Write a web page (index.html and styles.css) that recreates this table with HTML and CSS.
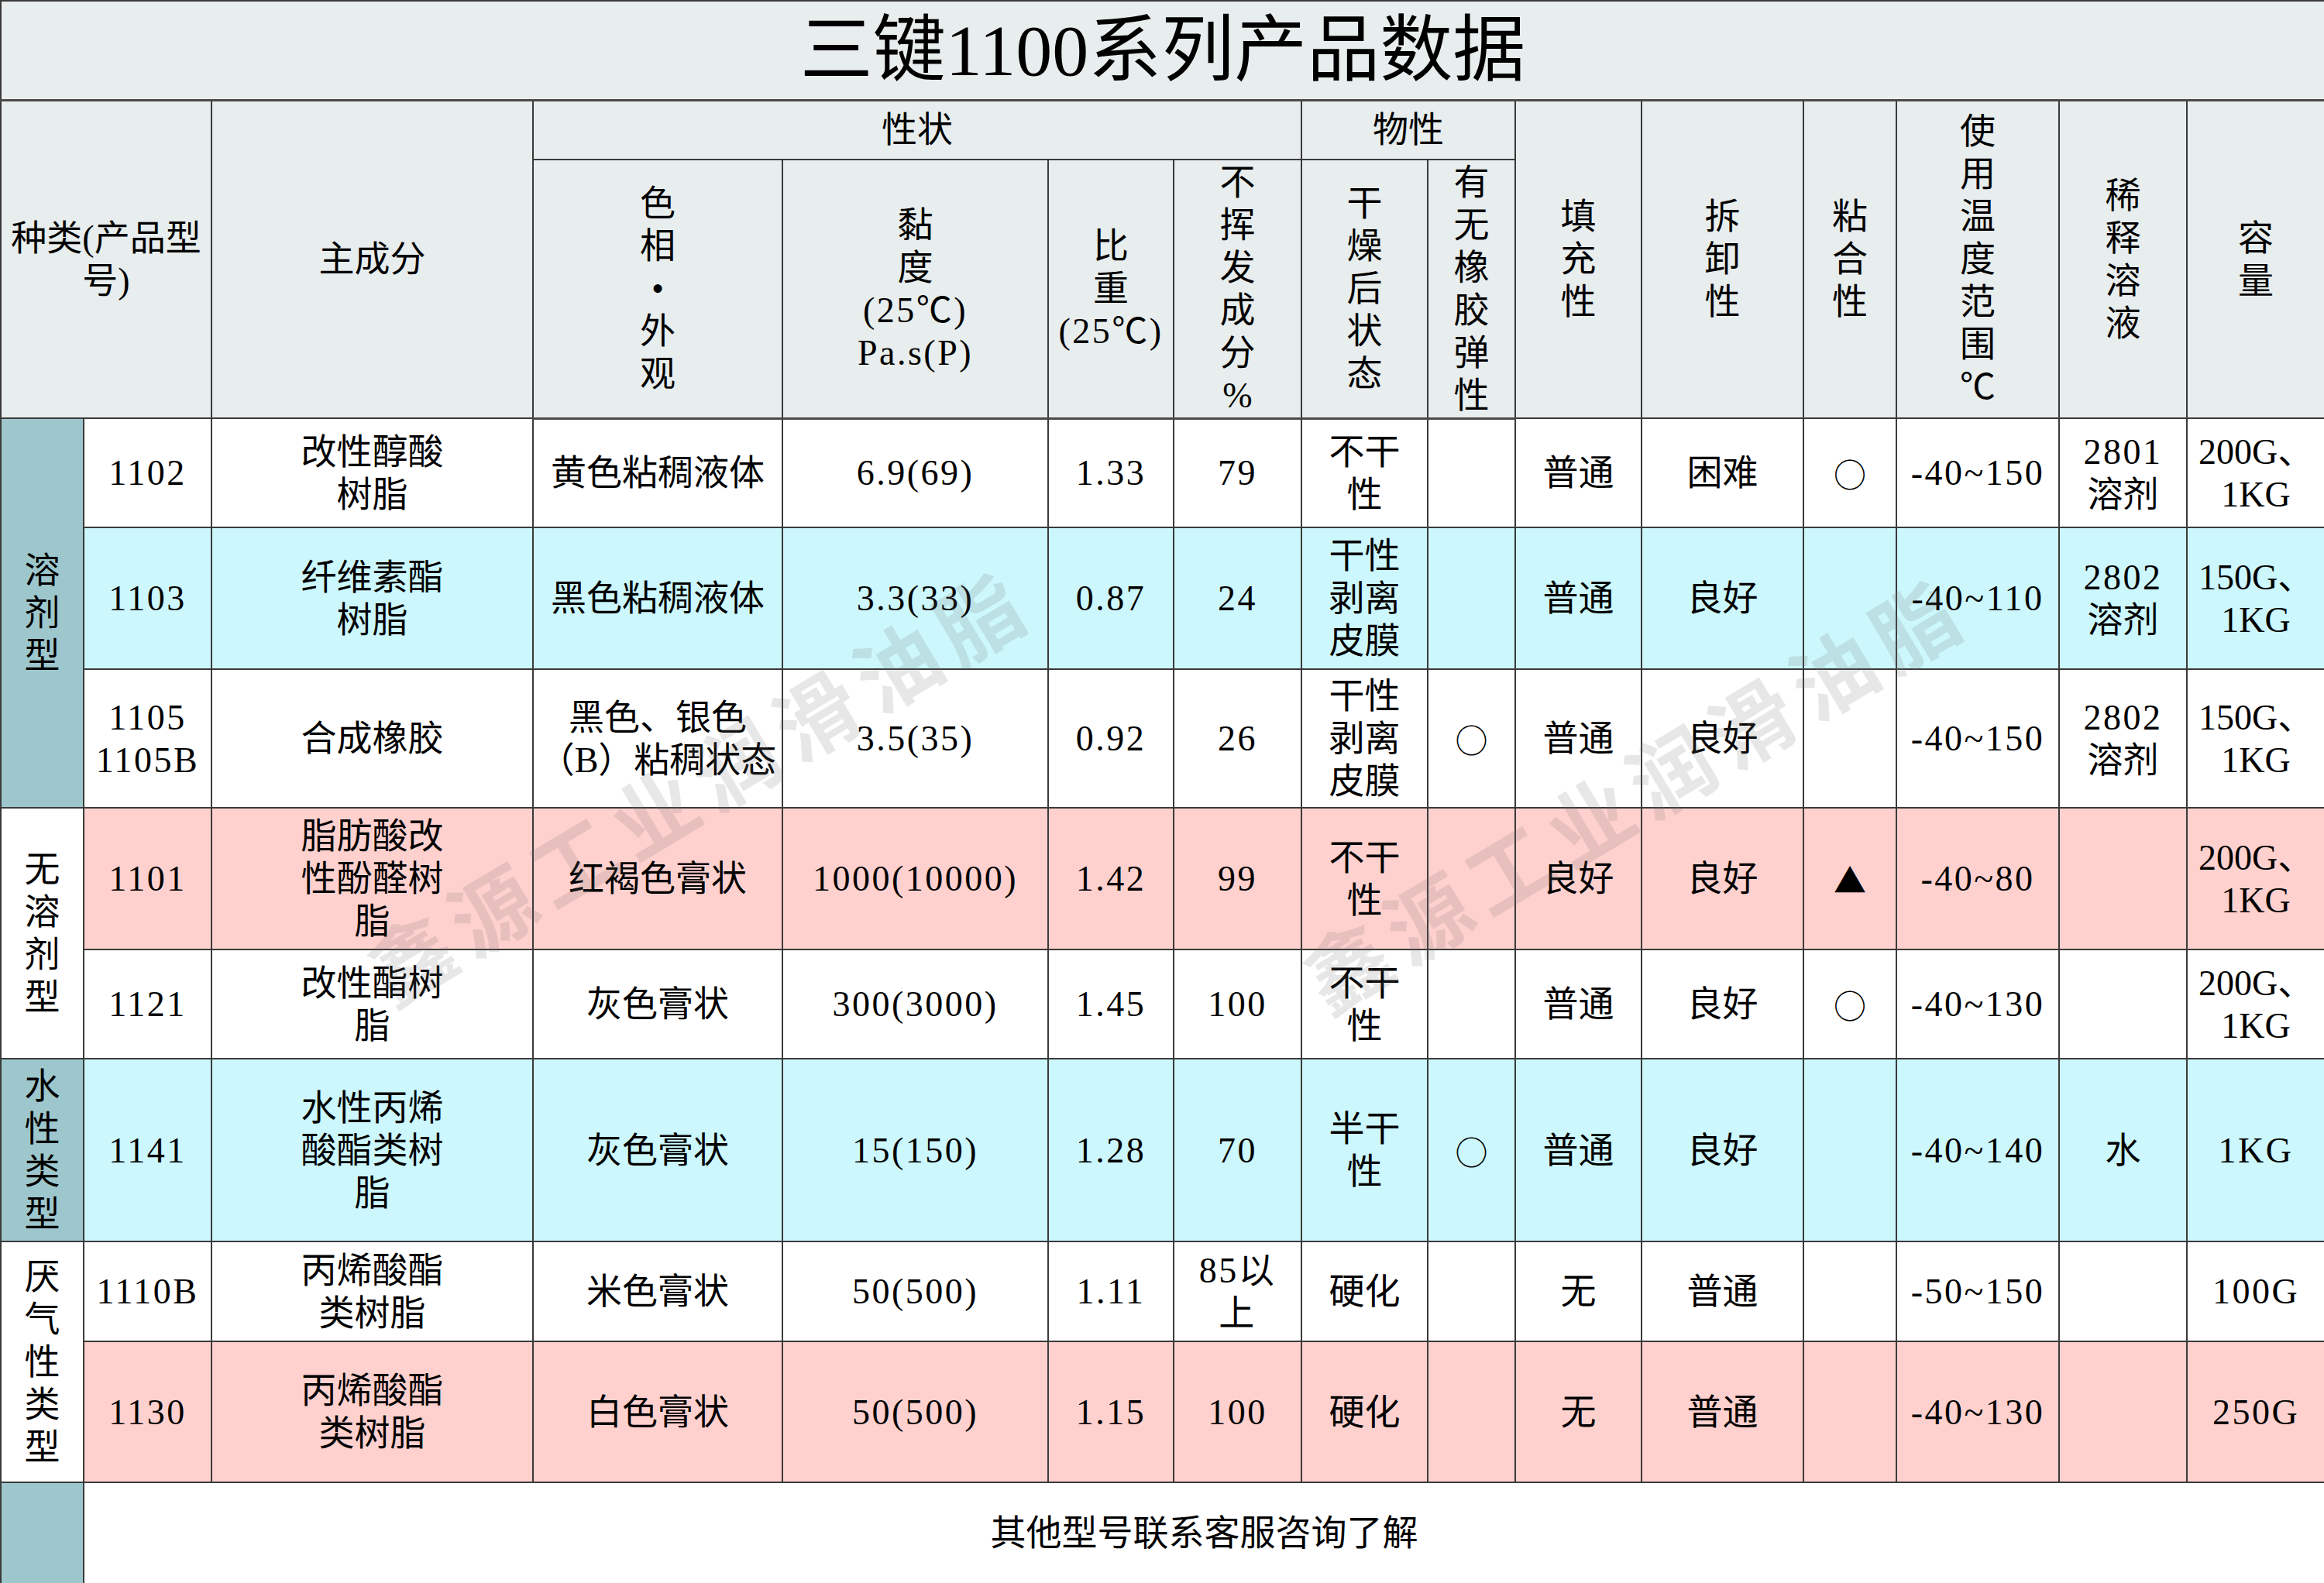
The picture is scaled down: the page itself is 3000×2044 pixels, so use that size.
FILE: index.html
```html
<!DOCTYPE html>
<html lang="zh-CN">
<head>
<meta charset="utf-8">
<title>三键1100系列产品数据</title>
<link rel="stylesheet" href="styles.css">
</head>
<body>
<div class="sheet">
<table class="grid">
  <colgroup>
    <col class="c0"><col class="c1"><col class="c2"><col class="c3"><col class="c4">
    <col class="c5"><col class="c6"><col class="c7"><col class="c8"><col class="c9">
    <col class="c10"><col class="c11"><col class="c12"><col class="c13"><col class="c14">
  </colgroup>
  <tr class="r-title">
    <th class="title" colspan="15">三键1100系列产品数据</th>
  </tr>
  <tr class="r-h1">
    <th class="hd" colspan="2" rowspan="2">种类(产品型<br>号)</th>
    <th class="hd" rowspan="2">主成分</th>
    <th class="hd" colspan="4">性状</th>
    <th class="hd" colspan="2">物性</th>
    <th class="hd" rowspan="2">填<br>充<br>性</th>
    <th class="hd" rowspan="2">拆<br>卸<br>性</th>
    <th class="hd" rowspan="2">粘<br>合<br>性</th>
    <th class="hd" rowspan="2">使<br>用<br>温<br>度<br>范<br>围<br>℃</th>
    <th class="hd" rowspan="2">稀<br>释<br>溶<br>液</th>
    <th class="hd" rowspan="2">容<br>量</th>
  </tr>
  <tr class="r-h2">
    <th class="hd">色<br>相<br>•<br>外<br>观</th>
    <th class="hd">黏<br>度<br><span class="n">(25℃)</span><br><span class="n">Pa.s(P)</span></th>
    <th class="hd">比<br>重<br><span class="n">(25℃)</span></th>
    <th class="hd">不<br>挥<br>发<br>成<br>分<br>%</th>
    <th class="hd">干<br>燥<br>后<br>状<br>态</th>
    <th class="hd">有<br>无<br>橡<br>胶<br>弹<br>性</th>
  </tr>

  <tr class="row w h141">
    <td class="cat teal" rowspan="3">溶<br>剂<br>型</td>
    <td class="n">1102</td><td>改性醇酸<br>树脂</td><td>黄色粘稠液体</td><td class="n">6.9(69)</td><td class="n">1.33</td><td class="n">79</td>
    <td>不干<br>性</td><td></td><td>普通</td><td>困难</td><td class="sym">○</td><td class="n">-40~150</td>
    <td><span class="n">2801</span><br>溶剂</td><td>200G、<br>1KG</td>
  </tr>
  <tr class="row c h183">
    <td class="n">1103</td><td>纤维素酯<br>树脂</td><td>黑色粘稠液体</td><td class="n">3.3(33)</td><td class="n">0.87</td><td class="n">24</td>
    <td>干性<br>剥离<br>皮膜</td><td></td><td>普通</td><td>良好</td><td></td><td class="n">-40~110</td>
    <td><span class="n">2802</span><br>溶剂</td><td>150G、<br>1KG</td>
  </tr>
  <tr class="row w h179">
    <td class="n">1105<br>1105B</td><td>合成橡胶</td><td>黑色、银色<br>（B）粘稠状态</td><td class="n">3.5(35)</td><td class="n">0.92</td><td class="n">26</td>
    <td>干性<br>剥离<br>皮膜</td><td class="sym">○</td><td>普通</td><td>良好</td><td></td><td class="n">-40~150</td>
    <td><span class="n">2802</span><br>溶剂</td><td>150G、<br>1KG</td>
  </tr>
  <tr class="row p h183">
    <td class="cat white" rowspan="2">无<br>溶<br>剂<br>型</td>
    <td class="n">1101</td><td>脂肪酸改<br>性酚醛树<br>脂</td><td>红褐色膏状</td><td class="n">1000(10000)</td><td class="n">1.42</td><td class="n">99</td>
    <td>不干<br>性</td><td></td><td>良好</td><td>良好</td><td class="sym">▲</td><td class="n">-40~80</td>
    <td></td><td>200G、<br>1KG</td>
  </tr>
  <tr class="row w h141">
    <td class="n">1121</td><td>改性酯树<br>脂</td><td>灰色膏状</td><td class="n">300(3000)</td><td class="n">1.45</td><td class="n">100</td>
    <td>不干<br>性</td><td></td><td>普通</td><td>良好</td><td class="sym">○</td><td class="n">-40~130</td>
    <td></td><td>200G、<br>1KG</td>
  </tr>
  <tr class="row c h236">
    <td class="cat teal">水<br>性<br>类<br>型</td>
    <td class="n">1141</td><td>水性丙烯<br>酸酯类树<br>脂</td><td>灰色膏状</td><td class="n">15(150)</td><td class="n">1.28</td><td class="n">70</td>
    <td>半干<br>性</td><td class="sym">○</td><td>普通</td><td>良好</td><td></td><td class="n">-40~140</td>
    <td>水</td><td class="n">1KG</td>
  </tr>
  <tr class="row w h129">
    <td class="cat white" rowspan="2">厌<br>气<br>性<br>类<br>型</td>
    <td class="n">1110B</td><td>丙烯酸酯<br>类树脂</td><td>米色膏状</td><td class="n">50(500)</td><td class="n">1.11</td><td class="n">85以<br>上</td>
    <td>硬化</td><td></td><td>无</td><td>普通</td><td></td><td class="n">-50~150</td>
    <td></td><td class="n">100G</td>
  </tr>
  <tr class="row p h182">
    <td class="n">1130</td><td>丙烯酸酯<br>类树脂</td><td>白色膏状</td><td class="n">50(500)</td><td class="n">1.15</td><td class="n">100</td>
    <td>硬化</td><td></td><td>无</td><td>普通</td><td></td><td class="n">-40~130</td>
    <td></td><td class="n">250G</td>
  </tr>
  <tr class="row w h131">
    <td class="cat teal"></td>
    <td class="note" colspan="14">其他型号联系客服咨询了解</td>
  </tr>
</table>
<div class="mark mark-a">鑫源工业润滑油脂</div>
<div class="mark mark-b">鑫源工业润滑油脂</div>
</div>
</body>
</html>
```

FILE: styles.css
```css
html, body {
  margin: 0;
  padding: 0;
  background: #ffffff;
}

.sheet {
  position: relative;
  width: 3000px;
  height: 2044px;
  overflow: hidden;
}

.grid {
  width: 3000px;
  border-collapse: collapse;
  table-layout: fixed;
  font-family: "Liberation Serif", "Noto Sans CJK SC", serif;
  font-size: 46px;
  line-height: 55px;
  color: #000;
}

.c0 { width: 107px; }
.c1 { width: 165px; }
.c2 { width: 415px; }
.c3 { width: 322px; }
.c4 { width: 343px; }
.c5 { width: 162px; }
.c6 { width: 165px; }
.c7 { width: 163px; }
.c8 { width: 113px; }
.c9 { width: 163px; }
.c10 { width: 209px; }
.c11 { width: 120px; }
.c12 { width: 210px; }
.c13 { width: 165px; }
.c14 { width: 178px; }

.grid th,
.grid td {
  border: 2px solid #3a3a3a;
  padding: 0;
  text-align: center;
  vertical-align: middle;
  font-weight: normal;
  overflow: hidden;
}

.r-title { height: 128px; }
.r-h1 { height: 77px; }
.r-h2 { height: 334px; }

.title {
  background: #e8eded;
  font-size: 94px;
  line-height: 110px;
  border-bottom: 3px solid #4a4a4a !important;
}

.hd {
  background: #e8eded;
}

.r-h2 .hd {
  border-bottom: 3px solid #4a4a4a;
}

.h129 { height: 129px; }
.h131 { height: 131px; }
.h141 { height: 141px; }
.h179 { height: 179px; }
.h182 { height: 182px; }
.h183 { height: 183px; }
.h236 { height: 236px; }

.row.w { background: #ffffff; }
.row.c { background: #ccf7fc; }
.row.p { background: #ffd1ce; }

.cat.teal { background: #9dc7cc; }
.cat.white { background: #ffffff; }

.n {
  letter-spacing: 2.5px;
}

.sym {
  font-family: "Noto Sans CJK SC", sans-serif;
  font-size: 42px;
}

.note {
  background: #ffffff;
}

.mark {
  position: absolute;
  left: 0;
  top: 0;
  font-family: "Noto Sans CJK SC", sans-serif;
  font-size: 108px;
  font-weight: 700;
  line-height: 1;
  letter-spacing: 14px;
  color: rgba(110, 110, 110, 0.17);
  white-space: nowrap;
  pointer-events: none;
}

.mark-a {
  transform: translate(900px, 1010px) translate(-50%, -50%) rotate(-31deg);
}

.mark-b {
  transform: translate(2108px, 1020px) translate(-50%, -50%) rotate(-31deg);
}
```
